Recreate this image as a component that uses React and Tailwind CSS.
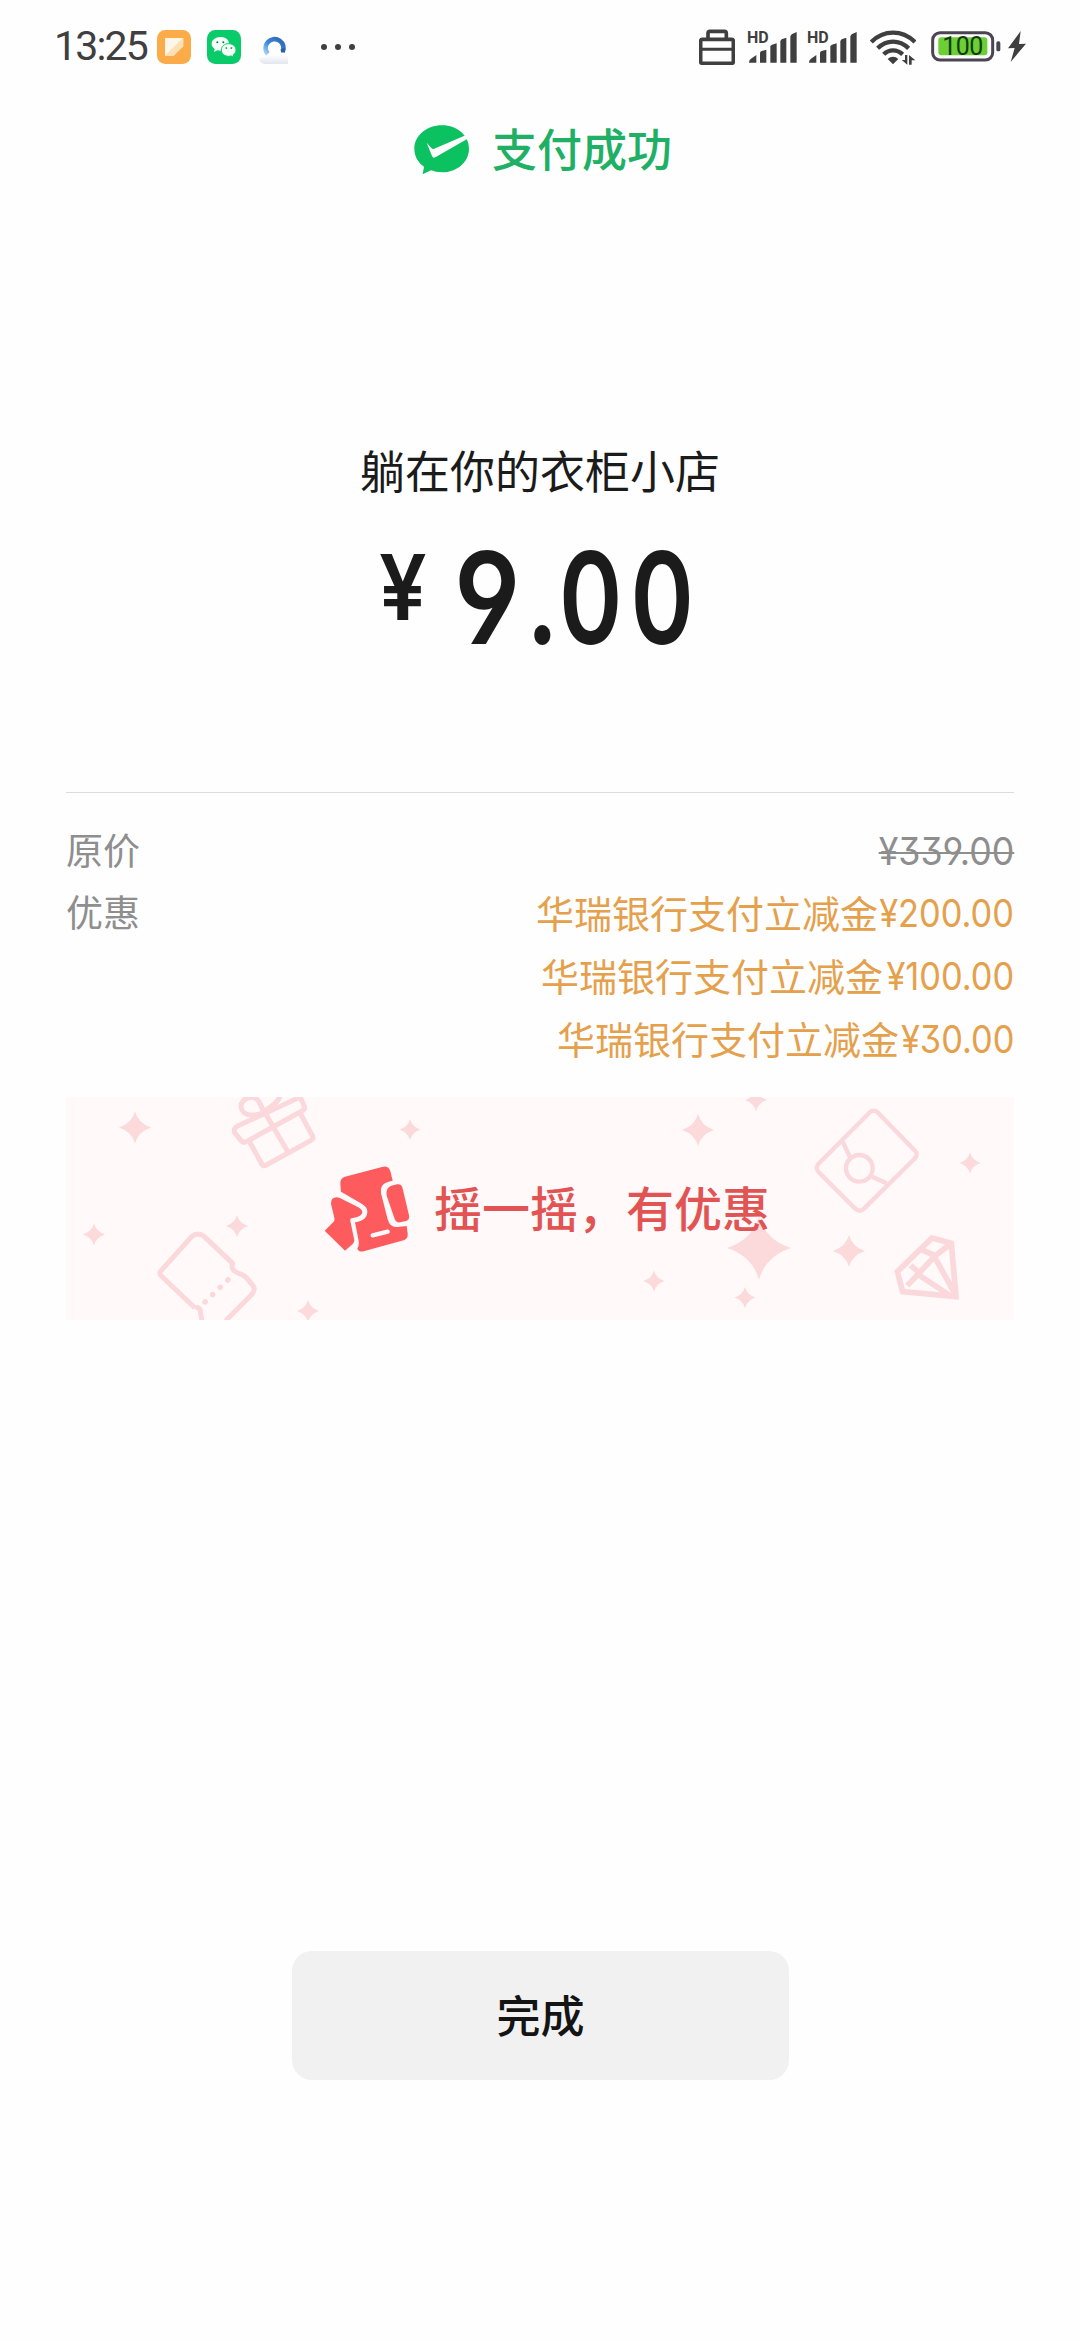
import React from "react";

const CJK = "font-['Noto_Sans_CJK_SC',sans-serif]";
const NUM = "font-[Roboto,sans-serif]";
const MONEY = "font-[Inter,sans-serif] [font-feature-settings:'cv04','cv09']";

function NotesIcon() {
  return (
    <svg className="ml-[11px] size-[34px] shrink-0" viewBox="0 0 102 102">
      <rect width="102" height="102" rx="25" fill="#fbab47" />
      <path d="M24 25h55v24L49 78H24z" fill="#fdd7a4" />
      <path d="M24 28q0-4 4-4h51L24 78z" fill="#fff6e8" />
      <path d="M79 24v25L50 77l-26 1z" fill="#fde0b6" />
    </svg>
  );
}

function ChatIcon() {
  return (
    <svg className="ml-4 size-[34px] shrink-0" viewBox="0 0 102 102">
      <rect width="102" height="102" rx="25" fill="#09cb69" />
      <path d="M40 21c-15 0-26 9-26 20 0 7 4 12 9 16l-2 9 10-5 9 1c15 0 26-9 26-21S55 21 40 21z" fill="#f4fff8" />
      <path d="M65 41c-13 0-22 8-22 19s10 19 22 19l8-1 8 4-2-8c5-3 8-8 8-14 0-11-9-19-22-19z" fill="#f4fff8" stroke="#09cb69" strokeWidth="3" />
      <circle cx="31" cy="37" r="3" fill="#087b45" />
      <circle cx="49" cy="37" r="3" fill="#087b45" />
      <circle cx="58" cy="54" r="2.6" fill="#087b45" />
      <circle cx="73" cy="54" r="2.6" fill="#087b45" />
    </svg>
  );
}

function BrowserIcon() {
  return (
    <svg className="ml-[17px] h-[34px] w-[30px] shrink-0" viewBox="655 59 90 102">
      <defs>
        <linearGradient id="ring" x1="1" y1="0" x2="0" y2="1">
          <stop offset="0" stopColor="#2a66b4" />
          <stop offset=".55" stopColor="#3f86dc" />
          <stop offset="1" stopColor="#a8d3f6" />
        </linearGradient>
        <linearGradient id="mist" x1="0" y1="0" x2="0" y2="1">
          <stop offset="0" stopColor="#fefefe" />
          <stop offset="1" stopColor="#e3e6ee" />
        </linearGradient>
      </defs>
      <path d="M657 146q25-14 88-12v27h-72q-12-4-16-15z" fill="url(#mist)" />
      <circle cx="703" cy="112" r="21" fill="#fff" />
      <path d="M684 131a27 27 0 1 1 45-6" fill="none" stroke="url(#ring)" strokeWidth="14" />
      <path d="M723 116l12-4v13l-10 2z" fill="#2b5ea6" />
    </svg>
  );
}

function CaseIcon() {
  return (
    <svg className="h-9 w-9 shrink-0" viewBox="57 55 108 108">
      <path d="M84 86V68q0-6 6-6h43q6 0 6 6v18" fill="none" stroke="#3f3f3f" strokeWidth="11" />
      <rect x="62" y="86" width="98" height="72" rx="5" fill="none" stroke="#3f3f3f" strokeWidth="11" />
      <path d="M62 116h98" stroke="#3f3f3f" strokeWidth="9" />
    </svg>
  );
}

function Signal({ className }) {
  return (
    <div className={`relative h-[34px] w-[50px] shrink-0 ${className}`}>
      <svg className="size-full" viewBox="201 60 150 102">
        <path
          d="M207 158q0-9 6-12l16-11v23zM240 158v-29q0-5 5-6l14-4v39zM271 158v-50l5-4 14-4v58zM301 158V93l4-5 14-5v75zM331 158V79l4-6 15-7v92z"
          fill="#3f3f3f"
        />
      </svg>
      <span className={`absolute left-0 top-0 text-[16px] font-bold leading-[16px] text-[#3f3f3f] ${NUM}`}>HD</span>
    </div>
  );
}

function WifiIcon() {
  return (
    <svg className="ml-[13px] h-9 w-[46px] shrink-0" viewBox="569 58 138 108">
      <g fill="none" stroke="#3f3f3f" strokeWidth="13">
        <path d="M573 97q28-28 65-28t66 28" />
        <path d="M592 116q20-20 46-20t47 20" />
        <path d="M610 134q12-12 28-12t29 12" />
      </g>
      <path d="M622 148q7-7 16-7t16 7l-16 16z" fill="#3f3f3f" />
      <path d="M681 136v29l-17-14h10v-15zM686 165v-29l19 16h-11v13z" fill="#3f3f3f" />
    </svg>
  );
}

function Battery() {
  return (
    <div className="relative ml-[15px] h-[31px] w-[70px] shrink-0">
      <svg className="size-full" viewBox="752 65 210 93">
        <rect x="757" y="70" width="180" height="82" rx="22" fill="#fdfdfd" stroke="#4a4453" strokeWidth="9" />
        <rect x="774" y="84" width="147" height="54" rx="9" fill="#6bcf35" />
        <rect x="948" y="96" width="12" height="30" rx="5" fill="#4a4453" />
      </svg>
      <span className={`absolute left-0 top-0 w-[63px] text-center text-[25px] leading-[31px] tracking-[-0.6px] text-[#143c0b] ${NUM}`}>100</span>
    </div>
  );
}

function StatusBar() {
  return (
    <header className="flex h-[93px] items-center pl-[54px] pr-[54px]">
      <span className={`w-[92px] whitespace-nowrap text-[41px] leading-none tracking-[-1.8px] text-[#3f3f3f] ${NUM}`}>13:25</span>
      <NotesIcon />
      <ChatIcon />
      <BrowserIcon />
      <div className="ml-[33px] flex gap-2">
        <i className="size-[6px] rounded-full bg-[#3f3f3f]" />
        <i className="size-[6px] rounded-full bg-[#3f3f3f]" />
        <i className="size-[6px] rounded-full bg-[#3f3f3f]" />
      </div>
      <div className="ml-auto flex items-center">
        <CaseIcon />
        <Signal className="ml-3" />
        <Signal className="ml-[10px]" />
        <WifiIcon />
        <Battery />
        <svg className="ml-[7px] h-[31px] w-[18px] shrink-0" viewBox="981 64 54 93">
          <path d="M1019 64l-38 52 20-1-12 42 46-55-21 1z" fill="#3f3f3f" />
        </svg>
      </div>
    </header>
  );
}

function PayLogo() {
  return (
    <svg className="h-[50px] w-[56px]" viewBox="73 74 168 150">
      <path d="M157 75c-46 0-83 31-83 70 0 22 11 41 29 54l-4 23 25-12c10 4 21 6 33 6 46 0 81-32 81-71S203 75 157 75z" fill="#0cc160" />
      <path d="M111 127l14 16q5 5 12 1l98-42 4 10-102 59q-7 4-10-4z" fill="#fefefe" />
    </svg>
  );
}

const SPARKS = [
  [135, 1127.5, 16],
  [94, 1234.5, 11],
  [237, 1226, 11],
  [308, 1311, 11],
  [410, 1129.5, 10.5],
  [698, 1130, 16],
  [756, 1100, 11],
  [970, 1163, 10.5],
  [849, 1251, 16],
  [759, 1248, 32],
  [654, 1281, 10.5],
  [745, 1297.5, 10.5],
];

function BannerArt() {
  return (
    <svg className="absolute inset-0 size-full" viewBox="66 1097 948 223">
      <g fill="#fcd9db">
        {SPARKS.map(([x, y, r]) => (
          <path key={`${x}-${y}`} transform={`translate(${x} ${y}) scale(${r})`} d="M0-1Q.2-.26 1 0Q.2.26 0 1Q-.2.26-1 0Q-.2-.26 0-1z" />
        ))}
      </g>
      {/* gift box and coupon */}
      <g transform="translate(60 1080) scale(.33333)" fill="none" stroke="#fad8db" strokeWidth="15" strokeLinejoin="round">
        <path d="M524 158q-4-13 7-19L712 55q9-4 13 5l7 17q4 11-6 16L561 184q-12 7-18-3z" />
        <path d="M569 186l36 65q5 9 14 4l134-74q9-5 4-14l-35-65M612 92l28 50 44 74" />
        <path d="M609 98c-22 10-55 12-64-10-7-20 9-36 31-36 19 0 26 22 34 42zM613 94c20-15 42-25 48-48" />
        <path d="M405 684L304 588q-9-8 0-17L395 470q19-16 38 0l85 80q-5 14 4 22t22 11q13 4 28 26 20 16 2 36L497 722" />
        <path d="M405 684q10-5 16 6 0 9 5 32" />
        <path d="M435 666L512 592" strokeDasharray="1 30.5" strokeWidth="16" strokeLinecap="round" />
      </g>
      {/* red packet and diamond */}
      <g transform="translate(640 1080) scale(.33333)" fill="none" stroke="#fad8db" strokeWidth="13" strokeLinejoin="round">
        <path d="M688 98L535 252q-10 12 0 23L646 386q13 12 26 0L825 235q10-12 0-23L714 98q-13-11-26 0z" />
        <circle cx="658" cy="265" r="40" />
        <path d="M608 184l22 48M696 290l44 20" />
        <g strokeWidth="17" strokeLinejoin="miter">
          <path d="M876 474l58 16 14 160-160-15-16-60z" />
          <path d="M842 508l44 19 48-37M886 527l-84 90M826 578l106 70M886 535l60 108M812 556l28 24" />
        </g>
      </g>
    </svg>
  );
}

function ShakeIcon() {
  return (
    <svg className="h-[88px] w-[88px] shrink-0" viewBox="102 70 264 264" fill="#fd5b5e">
      <path d="M151 126q-1-16 14-21L276 76q18-5 25 12l7 29-15 4q-25 8-20 34l20 78q7 26 30 23l27-3 3 23q2 14-12 20L221 329q-14 3-19-8 5-10 5-18l-12-61q37-4 37-33 0-13-17-23l-62-36z" />
      <path d="M304 132l17-4q12-2 16 9l20 84q3 14-9 17l-18 4q-11 2-16-10l-24-70q-4-24 14-30z" />
      <path d="M148 168l57 29q12 8 12 15 0 12-28 17-10 0-8 9l12 58q0 6-5 11l-23 20-61-60 27-27q4-4 2-12l-10-42q0-23 25-18z" />
      <path d="M248 281l45-11" stroke="#fff9f9" strokeWidth="13" strokeLinecap="round" />
    </svg>
  );
}

function Discount({ amount, width }) {
  return (
    <div className="flex h-[63px] items-center text-[38px] leading-[63px]">
      <span className="-mt-[3px]">华瑞银行支付立减金</span>
      <span className={`mt-[2px] flex justify-end ${width}`}>
        <span className={`origin-right scale-x-[.905] whitespace-nowrap text-[38px] ${MONEY}`}>{amount}</span>
      </span>
    </div>
  );
}

export default function App() {
  return (
    <div className={`flex h-[2340px] w-[1080px] flex-col overflow-hidden bg-[#fefefe] ${CJK}`}>
      <StatusBar />

      <div className="flex h-[114px] items-center pl-[414px] text-[#20b065]">
        <PayLogo />
        <h1 className="-mt-[5px] ml-[22px] text-[45px] font-medium leading-none">支付成功</h1>
      </div>

      <section className="mt-[230px] flex flex-col items-center text-[#1b1b1b]">
        <h2 className="h-[66px] text-[45px] leading-[66px]">躺在你的衣柜小店</h2>
        <div className={`mt-[16px] flex h-[160px] w-[330px] items-start font-semibold ${MONEY}`}>
          <span className="ml-[4px] mt-[18px] w-[75px] shrink-0 origin-left scale-x-[.93] text-[91px] leading-[100px]">¥</span>
          <div className="mt-[9px] flex shrink-0 whitespace-nowrap text-[128px] leading-[140px]">
            <span className="w-[72px] origin-left scale-x-[.86]">9</span>
            <span className="w-[33px] origin-left scale-x-[.8]">.</span>
            <span className="origin-left scale-x-[.75] tracking-[11px]">00</span>
          </div>
        </div>
      </section>

      <section className="mx-[66px] mt-[113px] border-t border-[#dcdcdc]">
        <div className="mt-[27px] flex h-[61px] items-center justify-between text-[37px] leading-[61px] text-[#8e8e8e]">
          <span className="-mt-[3px]">原价</span>
          <span className={`mt-[1px] origin-right scale-x-[.94] text-[38px] line-through decoration-2 ${MONEY}`}>¥339.00</span>
        </div>
        <div className="flex justify-between">
          <span className="text-[37px] leading-[61px] text-[#8e8e8e]">优惠</span>
          <div className="flex flex-col items-end text-[#e5a04c]">
            <Discount amount="¥200.00" width="w-[136px]" />
            <Discount amount="¥100.00" width="w-[131px]" />
            <Discount amount="¥30.00" width="w-[115px]" />
          </div>
        </div>
      </section>

      <section className="relative mx-[66px] mt-[27px] flex h-[223px] items-center overflow-hidden bg-[#fff9f9]">
        <BannerArt />
        <div className="relative flex items-center pl-[258px]">
          <ShakeIcon />
          <span className="-mt-[6px] ml-[22px] whitespace-nowrap text-[48px] font-medium leading-none text-[#e25354]">摇一摇，有优惠</span>
        </div>
      </section>

      <button className="ml-[292px] mt-[631px] h-[129px] w-[497px] rounded-[20px] bg-[#f1f1f1] pb-[3px] text-[44px] font-medium leading-none text-[#141414]">
        完成
      </button>
    </div>
  );
}
